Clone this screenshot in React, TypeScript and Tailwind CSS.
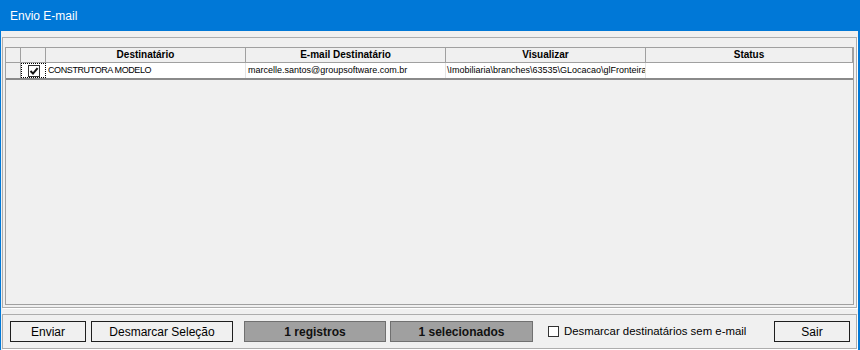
import React from 'react';

const ui = { fontFamily: "'Liberation Sans', Arial, sans-serif" };

const columns = [
  { label: '', w: 'w-[15px]' },
  { label: '', w: 'w-[25px]' },
  { label: 'Destinatário', w: 'w-[200px]' },
  { label: 'E-mail Destinatário', w: 'w-[200px]' },
  { label: 'Visualizar', w: 'w-[200px]' },
  { label: 'Status', w: 'flex-1' },
];

function CheckMark() {
  return (
    <svg width="10" height="10" viewBox="0 0 10 10">
      <path d="M1.5 5 L4 7.6 L8.6 2.2" fill="none" stroke="#111" strokeWidth="2" />
    </svg>
  );
}

export default function App() {
  return (
    <div className="w-[860px] h-[350px] bg-[#0078d7] flex flex-col pl-[1px] pr-[2px] pb-[2px]" style={ui}>
      {/* Title bar */}
      <div className="h-[31px] shrink-0 flex items-center pl-[9px] text-white text-[12px]">Envio E-mail</div>

      {/* Body */}
      <div className="flex-1 bg-[#f0f0f0] flex flex-col pt-[6px] pb-[1px] px-[1px] gap-[6px]">
        {/* Grid group */}
        <div className="h-[271px] border border-[#adadad] shadow-[1px_1px_0_#fff] flex flex-col pt-[9px] px-[2px] pb-[2px]">
          <div className="flex-1 border border-[#a0a0a0] bg-[#f0f0f0] flex flex-col overflow-hidden">
            <div className="h-[15px] flex shrink-0">
              {columns.map((c, i) => (
                <div
                  key={i}
                  className={`${c.w} shrink-0 border-r border-b border-[#a0a0a0] flex items-center justify-center text-[10px] font-bold text-black leading-none`}
                >
                  {c.label}
                </div>
              ))}
            </div>
            <div className="h-[17px] flex shrink-0 border-b-2 border-[#8a8a8a] text-[9px] text-black leading-none">
              <div className="w-[15px] shrink-0 border-r border-[#a0a0a0] bg-[#f0f0f0]" />
              <div className="w-[25px] shrink-0 bg-white border border-dotted border-black flex items-center justify-center">
                <div className="w-[12px] h-[12px] border border-[#333] bg-white flex items-center justify-center">
                  <CheckMark />
                </div>
              </div>
              <div className="w-[200px] shrink-0 bg-white border-r border-[#e4e4e4] flex items-center pl-[2px] whitespace-nowrap overflow-hidden tracking-[-0.4px]">
                CONSTRUTORA MODELO
              </div>
              <div className="w-[200px] shrink-0 bg-white border-r border-[#e4e4e4] flex items-center pl-[2px] whitespace-nowrap overflow-hidden">
                marcelle.santos@groupsoftware.com.br
              </div>
              <div className="w-[200px] shrink-0 bg-white border-r border-[#e4e4e4] flex items-center pl-[1px] whitespace-nowrap overflow-hidden">
                \Imobiliaria\branches\63535\GLocacao\glFronteira
              </div>
              <div className="flex-1 bg-white" />
            </div>
          </div>
        </div>

        {/* Bottom bar */}
        <div className="h-[35px] border border-[#adadad] shadow-[1px_1px_0_#fff] flex items-start pt-[6px] pl-[7px] pr-[6px] text-[12px] text-black">
          <button className="w-[76px] h-[21px] border border-[#1e1e1e] bg-[#f0f0f0] leading-none">Enviar</button>
          <button className="ml-[5px] w-[142px] h-[21px] border border-[#1e1e1e] bg-[#f0f0f0] leading-none">Desmarcar Seleção</button>
          <div className="ml-[11px] w-[142px] h-[21px] border border-[#707070] bg-[#a0a0a0] flex items-center justify-center font-bold text-[#111]">
            1 registros
          </div>
          <div className="ml-[4px] w-[143px] h-[21px] border border-[#707070] bg-[#a0a0a0] flex items-center justify-center font-bold text-[#111]">
            1 selecionados
          </div>
          <label className="ml-[15px] h-[21px] flex items-center gap-[5px] text-[11.4px]">
            <span className="w-[11px] h-[11px] border border-[#333] bg-white" />
            <span>Desmarcar destinatários sem e-mail</span>
          </label>
          <button className="ml-auto w-[76px] h-[21px] border border-[#1e1e1e] bg-[#f0f0f0] leading-none">Sair</button>
        </div>
      </div>
    </div>
  );
}
